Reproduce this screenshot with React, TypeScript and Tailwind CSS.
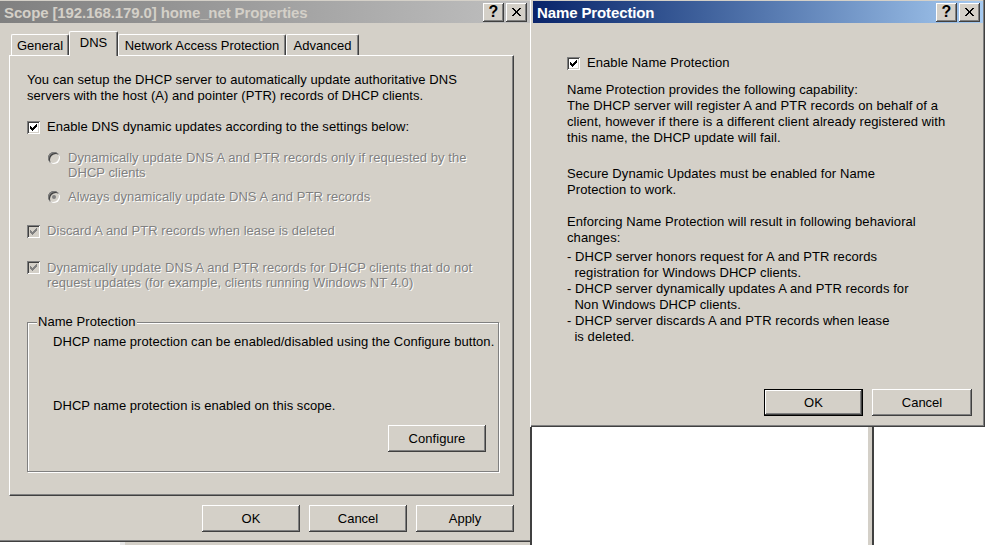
import React from 'react'

/* classic 3D bevels */
const raised =
  'bg-[#d4d0c8] shadow-[inset_-1px_-1px_0_#404040,inset_1px_1px_0_#ffffff,inset_-2px_-2px_0_#808080]'
const sunken =
  'shadow-[inset_1px_1px_0_#808080,inset_-1px_-1px_0_#ffffff,inset_2px_2px_0_#404040,inset_-2px_-2px_0_#d4d0c8]'
const grayed = 'text-[#808080] [text-shadow:1px_1px_0_#ffffff]'

function CheckMark({ color }: { color: string }) {
  return (
    <svg width="7" height="7" viewBox="0 0 7 7" shapeRendering="crispEdges" fill={color}>
      <rect x="6" y="0" width="1" height="1" />
      <rect x="5" y="1" width="2" height="1" />
      <rect x="0" y="2" width="1" height="1" />
      <rect x="4" y="2" width="3" height="1" />
      <rect x="0" y="3" width="2" height="1" />
      <rect x="3" y="3" width="3" height="1" />
      <rect x="0" y="4" width="5" height="1" />
      <rect x="1" y="5" width="3" height="1" />
      <rect x="2" y="6" width="1" height="1" />
    </svg>
  )
}

function CheckBox({ disabled }: { disabled?: boolean }) {
  return (
    <span
      className={`w-[13px] h-[13px] shrink-0 flex items-center justify-center ${
        disabled ? 'bg-[#d4d0c8]' : 'bg-white'
      } ${sunken}`}
    >
      <CheckMark color={disabled ? '#808080' : '#000000'} />
    </span>
  )
}

function Radio({ checked }: { checked?: boolean }) {
  return (
    <span className="w-[12px] h-[12px] shrink-0 rounded-full bg-[#d4d0c8] flex items-center justify-center shadow-[inset_1px_1px_0_#808080,inset_-1px_-1px_0_#ffffff,inset_2px_2px_0_#404040]">
      {checked && <span className="w-[4px] h-[4px] rounded-full bg-[#808080]" />}
    </span>
  )
}

function CloseGlyph() {
  return (
    <svg width="9" height="8" viewBox="0 0 9 8" shapeRendering="crispEdges">
      <path d="M0 0h2l2.5 3L7 0h2L5.5 4 9 8H7L4.5 5 2 8H0l3.5-4z" fill="#000" />
    </svg>
  )
}

function TitleBar({ title, active }: { title: string; active?: boolean }) {
  return (
    <div
      className={`h-[22px] flex items-center justify-between pl-[4px] pr-[3px] ${
        active
          ? 'bg-gradient-to-r from-[#0a246a] to-[#a6caf0] text-white'
          : 'bg-gradient-to-r from-[#808080] to-[#c0c0c0] text-[#d4d0c8]'
      }`}
    >
      <span className="font-bold text-[15px] tracking-[-0.12px] leading-none whitespace-nowrap">
        {title}
      </span>
      <div className="flex items-center gap-[2px]">
        <span
          className={`w-[21px] h-[19px] flex items-center justify-center text-black font-bold text-[16px] leading-none ${raised}`}
        >
          ?
        </span>
        <span className={`w-[21px] h-[19px] flex items-center justify-center ${raised}`}>
          <CloseGlyph />
        </span>
      </div>
    </div>
  )
}

function Button({ children, w, def }: { children: React.ReactNode; w: string; def?: boolean }) {
  return (
    <div
      className={`${w} h-[27px] flex items-center justify-center text-[13px] text-black ${raised} ${
        def ? 'border border-black' : ''
      }`}
    >
      {children}
    </div>
  )
}

function Tab({ label, w, selected }: { label: string; w: string; selected?: boolean }) {
  return (
    <div
      className={`${w} flex justify-center rounded-t-[2px] border-t border-l border-white border-r border-r-[#404040] shadow-[inset_-1px_0_0_#808080] bg-[#d4d0c8] ${
        selected ? 'h-[25px] -mb-px relative z-10 pt-[3px]' : 'h-[21px] pt-[3px]'
      }`}
    >
      <span className="text-[13px] leading-[15px]">{label}</span>
    </div>
  )
}

function ScopeDialog() {
  return (
    <div className="w-[530px] h-[542px] bg-[#d4d0c8] flex flex-col pt-px shadow-[inset_0_-1px_0_#404040,inset_0_-2px_0_#808080]">
      <TitleBar title="Scope [192.168.179.0] home_net Properties" />

      {/* tabs */}
      <div className="pl-[9px] pr-[16px] pt-[8px]">
        <div className="h-[24px] flex items-end pl-[2px]">
          <Tab label="General" w="w-[58px]" />
          <Tab label="DNS" w="w-[49px]" selected />
          <Tab label="Network Access Protection" w="w-[168px]" />
          <Tab label="Advanced" w="w-[73px]" />
        </div>

        {/* tab panel */}
        <div className="h-[441px] border-t border-l border-white border-r border-b border-r-[#404040] border-b-[#404040] shadow-[inset_-1px_-1px_0_#808080] pl-[17px] pt-[16px] text-[13px] leading-[16px] tracking-[0.05px] whitespace-nowrap">
          <div>You can setup the DHCP server to automatically update authoritative DNS</div>
          <div>servers with the host (A) and pointer (PTR) records of DHCP clients.</div>

          <div className="mt-[15px] flex items-center gap-[7px]">
            <CheckBox />
            <span>Enable DNS dynamic updates according to the settings below:</span>
          </div>

          <div className={`mt-[15px] ml-[21px] flex gap-[8px] leading-[15px] ${grayed}`}>
            <span className="pt-[2px]">
              <Radio />
            </span>
            <div>
              <div>Dynamically update DNS A and PTR records only if requested by the</div>
              <div>DHCP clients</div>
            </div>
          </div>

          <div className={`mt-[9px] ml-[21px] flex items-center gap-[8px] ${grayed}`}>
            <Radio checked />
            <span>Always dynamically update DNS A and PTR records</span>
          </div>

          <div className={`mt-[18px] flex items-center gap-[7px] ${grayed}`}>
            <CheckBox disabled />
            <span>Discard A and PTR records when lease is deleted</span>
          </div>

          <div className={`mt-[21px] flex gap-[7px] leading-[15px] ${grayed}`}>
            <span className="pt-[1px]">
              <CheckBox disabled />
            </span>
            <div>
              <div>Dynamically update DNS A and PTR records for DHCP clients that do not</div>
              <div>request updates (for example, clients running Windows NT 4.0)</div>
            </div>
          </div>

          {/* Name Protection group */}
          <div className="mt-[32px] relative w-[472px] h-[150px] border border-[#808080] shadow-[1px_1px_0_#ffffff,inset_1px_1px_0_#ffffff] pl-[25px] pt-[11px] pr-[12px] flex flex-col">
            <span className="absolute -top-[9px] left-[9px] px-px bg-[#d4d0c8]">Name Protection</span>
            <div>DHCP name protection can be enabled/disabled using the Configure button.</div>
            <div className="mt-[48px]">DHCP name protection is enabled on this scope.</div>
            <div className="mt-[11px] flex justify-end">
              <Button w="w-[98px]">Configure</Button>
            </div>
          </div>
        </div>

        {/* dialog buttons */}
        <div className="mt-[9px] flex justify-end gap-[9px]">
          <Button w="w-[98px]">OK</Button>
          <Button w="w-[98px]">Cancel</Button>
          <Button w="w-[98px]">Apply</Button>
        </div>
      </div>
    </div>
  )
}

function NameProtectionDialog() {
  return (
    <div className="w-[455px] h-[427px] bg-[#d4d0c8] flex flex-col pl-[2px] pr-[2px] pt-px border-l border-white shadow-[inset_-1px_-1px_0_#404040,inset_-2px_-2px_0_#808080]">
      <TitleBar title="Name Protection" active />

      <div className="pl-[34px] pr-[11px] pt-[32px] text-[13px] leading-[16px] flex flex-col">
        <div className="flex items-center gap-[7px] tracking-[0.08px]">
          <CheckBox />
          <span>Enable Name Protection</span>
        </div>

        <div className="tracking-[0.08px] whitespace-pre">
          <div className="mt-[11px]">
            <div>Name Protection provides the following capability:</div>
            <div>The DHCP server will register A and PTR records on behalf of a</div>
            <div>client, however if there is a different client already registered with</div>
            <div>this name, the DHCP update will fail.</div>
          </div>

          <div className="mt-[20px]">
            <div>Secure Dynamic Updates must be enabled for Name</div>
            <div>Protection to work.</div>
          </div>

          <div className="mt-[16px]">
            <div>Enforcing Name Protection will result in following behavioral</div>
            <div>changes:</div>
          </div>

          <div className="mt-[3px]">
            <div>- DHCP server honors request for A and PTR records</div>
            <div>  registration for Windows DHCP clients.</div>
            <div>- DHCP server dynamically updates A and PTR records for</div>
            <div>  Non Windows DHCP clients.</div>
            <div>- DHCP server discards A and PTR records when lease</div>
            <div>  is deleted.</div>
          </div>
        </div>

        <div className="mt-[44px] flex justify-end gap-[9px]">
          <Button w="w-[99px]" def>
            OK
          </Button>
          <Button w="w-[100px]">Cancel</Button>
        </div>
      </div>
    </div>
  )
}

export default function App() {
  return (
    <div className="w-[985px] h-[545px] overflow-hidden bg-white flex font-['Liberation_Sans',Arial,sans-serif] text-black">
      {/* left window + what peeks out below it */}
      <div className="flex flex-col">
        <ScopeDialog />
        <div className="h-[3px] flex bg-[#d4d0c8]">
          <div className="w-[120px] bg-white" />
          <div className="w-[5px] bg-[#e8e8e8]" />
        </div>
      </div>

      {/* right window + background windows below */}
      <div className="flex flex-col flex-1">
        <NameProtectionDialog />
        <div className="flex-1 flex border-l-2 border-[#404040]">
          <div className="w-[336px]" />
          <div className="w-[4px] bg-[#d4d0c8]" />
          <div className="w-[2px] bg-[#404040]" />
        </div>
      </div>
    </div>
  )
}
